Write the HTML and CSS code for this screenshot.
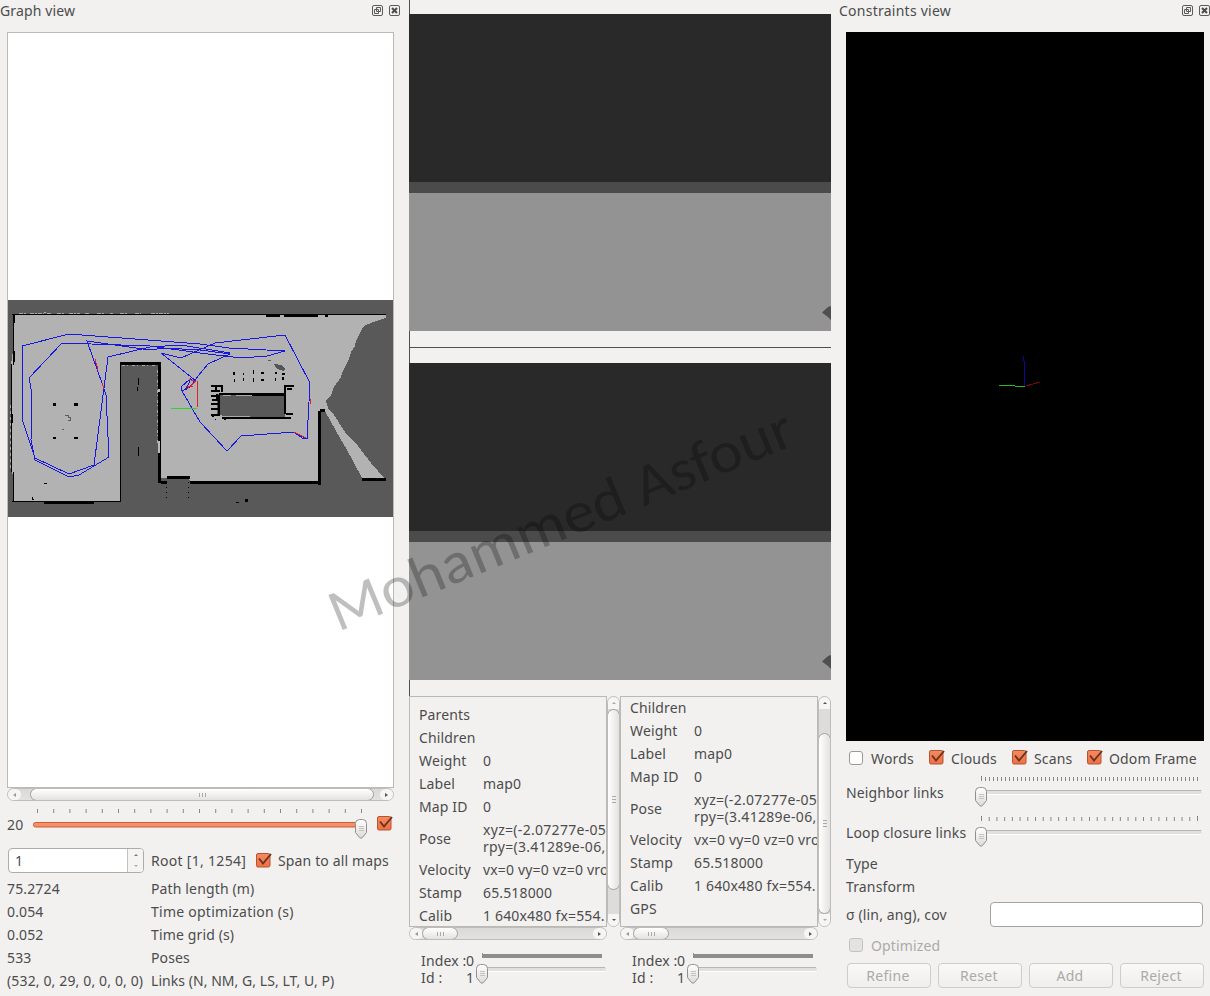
FILE: index.html
```html
<!DOCTYPE html>
<html lang="en">
<head>
<meta charset="utf-8">
<title>Database viewer</title>
<link rel="stylesheet" href="styles.css">
</head>
<body>
<svg class="defs" width="0" height="0">
  <defs>
    <linearGradient id="gh" x1="0" y1="0" x2="0" y2="1"><stop offset="0" stop-color="#fff"/><stop offset="1" stop-color="#dcdad8"/></linearGradient>
    <linearGradient id="go" x1="0" y1="0" x2="0" y2="1"><stop offset="0" stop-color="#f58a62"/><stop offset="1" stop-color="#ee7044"/></linearGradient>
    <symbol id="handle" viewBox="0 0 12 20"><path d="M.5 4.5Q.5 .5 4.5 .5H7.500Q11.500 .5 11.500 4.500V13.500L7.500 18.500Q6 20 4.500 18.500L.5 13.500Z" fill="url(#gh)" stroke="#92908d"/><path d="M4 7.500h5M4 9.500h5M4 11.500h5" stroke="#b9b7b5" stroke-width=".8"/></symbol>
    <symbol id="check" viewBox="0 0 16 16"><rect x=".5" y="1.500" width="13.500" height="13.500" rx="1.500" fill="url(#go)" stroke="#b5552f"/><path d="M3 6.500L7 11.500L15 2" fill="none" stroke="#6b3320" stroke-width="1.900"/></symbol>
    <symbol id="float" viewBox="0 0 11 11"><rect x=".5" y=".5" width="10" height="10" rx="1.500" fill="none" stroke="#5d5c59"/><path d="M4.500 2.500h4v4h-4zM2.500 4.500h4v4h-4z" fill="#f2f1f0" stroke="#5d5c59"/></symbol>
    <symbol id="close" viewBox="0 0 11 11"><rect x=".5" y=".5" width="10" height="10" rx="1.500" fill="none" stroke="#5d5c59"/><path d="M3 3l5 5M8 3l-5 5" stroke="#4c4b49" stroke-width="2"/></symbol>
  </defs>
</svg>
<main class="app">
  <section class="left">
    <header class="title"><span class="tt1">Graph view</span><span class="tools"><svg><use href="#float"/></svg><svg><use href="#close"/></svg></span></header>
    <div class="graph">
      <svg class="map" width="385" height="217" viewBox="8 300 385 217" shape-rendering="crispEdges">
        <rect x="8" y="300" width="385" height="217" fill="#595959"/>
        <path d="M13 315H386V318L373 322L364 326L361 331L356 341L355 346L351 352L349 359L343 371L341 377L334 387L331 395L326 401L328 408L334 415L345 432L358 446L371 463L386 480H363L352 459L347 450L340 438L325 411H320V482H190L189 478H161V362H120V502H13V475L11 470V365L13 350Z" fill="#b2b2b2"/>
        <path d="M19 313.500h7m4 0h14m3 0h5m5 0h8m4 0h11m5 0h4m8 0h7m6 0h3m7 0h8m7 0h6m10 0h18" stroke="#a9a9a9" fill="none" stroke-dasharray="4 1 2 1"/>
        <path d="M44 312h2M10.500 405v65" stroke="#aaa" stroke-dasharray="3 3"/>
        <path d="M12 314.500H386M13.500 315V365M11.500 364V472M13.500 472V502M12 501.500H120M120 362.500H161M120.500 362V502" stroke="#000" stroke-width="1.600" fill="none"/>
        <path d="M14 315v8M14 351v11M12 414v9M266 315.500h14M284 315.500h34M325 315.500h3" stroke="#000" stroke-width="2" fill="none"/>
        <path d="M120 363.500h41M159.500 363v120M44 502.500h50M161 482.500h6M167 477h23M190 482h131M319.500 411v74M320 410h5M362 479.500h24" stroke="#000" stroke-width="3" fill="none"/>
        <path d="M122 365.500h33M157.500 370v75" stroke="#aaa" stroke-dasharray="3 2 1 4"/>
        <path d="M159 389v3M159 441v12" stroke="#bbb" stroke-width="2"/>
        <path d="M138.500 378v7M137.500 387v4M138.500 447v9M44 483.500h3M32 497v2h2" stroke="#000" fill="none"/>
        <path d="M53 403h3v3h-3zM74 403h4v3h-4zM53 437h3v2h-3zM74 437h4v2h-4zM245 499h3v3h-3zM236 502h3v1h-3z"/>
        <path d="M65 415.500h3v2h2v3h-2M62 429.500h2M268 360.500h3" stroke="#5c5c5c" fill="none"/>
        <path d="M166.500 482v20M188.500 482v20" stroke="#000" stroke-dasharray="1 4"/>
        <path d="M274 364l7 1 4 4-1 2-7-2z" fill="#555"/>
        <path d="M217 394h68v23h-63v-2h-5z" fill="#595959"/>
        <path d="M219 393.500h66M285 385v29M222 417.500h69M211 386h11v6M284 386h10M287 389h5M286 414h7" stroke="#000" stroke-width="2" fill="none"/>
        <path d="M211 391h9M211 396h9M212 400h8M211 404h7M211 409h9M211 415h9M213 415v2M216 387v5M217 394v6M219 397v18M252 395h33" stroke="#000" stroke-width="1.500"/>
        <path d="M223 395h8M236 395h16M222 416.500h28" stroke="#aaa"/>
        <path d="M233 372h2v3h-2zM243 373h1v2h-1zM253 370h1v4h-1zM261 372h3v2h-3zM275 372h2v2h-2zM282 373h3v2h-3zM234 379h1v3h-1zM243 378h1v3h-1zM253 378h1v4h-1zM261 379h3v2h-3zM275 378h1v3h-1zM282 377h2v3h-2zM215 419h1v1h-1zM224 418h2v2h-2z"/>
        <g fill="none" stroke="#1717e0" stroke-width="1">
          <path d="M22 346L69 334L200 344L229 348L285 351L267 356L241 358L200 353L150 346L62 343L29 378L32 394L31 440L35 460L69 477L79 475L109 457L106 395L102 383L87 341L150 350L164 348L200 350L230 354L208 364L198 376L191 386L182 391L200 422L227 451L241 436L294 432L307 439L310 383L285 335L215 343L181 358L161 353L196 381"/>
          <path d="M22 346V419L35 458L69 474L94 465L108 357L150 347L181 345L230 353"/>
          <path d="M182 391L181 387L190 379L195 382L186 390L191 378M294 432L302 438L307 439"/>
        </g>
        <path d="M95 359L98 370M102 383L104 389M187 389L196 381M197 381V407M189 379L196 382M186 387L193 386M294 432L306 438M310 399V404" fill="none" stroke="#df2030" stroke-width="1"/>
        <path d="M171 408.500H197" stroke="#2bd52b"/>
      </svg>
    </div>
    <div class="hbar wide"><i class="ar l"></i><i class="th"><b></b></i><i class="ar r on"></i></div>
    <div class="iter">
      <span class="num">20</span>
      <svg class="sl" width="343" height="40" viewBox="33 801 343 40"><path d="M37 811H363" stroke="#898784" stroke-width="4" stroke-dasharray="1 15.200"/><rect x="33.500" y="822.500" width="330" height="4.500" rx="2" fill="#f78f67" stroke="#ca5f38"/><use href="#handle" x="355" y="819" width="12" height="20"/></svg>
      <svg class="ck"><use href="#check"/></svg>
    </div>
    <div class="rootrow">
      <div class="spin"><span>1</span><i><b class="up"></b><b class="dn"></b></i></div>
      <span class="root">Root [1, 1254]</span><svg class="ck"><use href="#check"/></svg><span class="span">Span to all maps</span>
    </div>
    <div class="stats">
      <span>75.2724</span><span>Path length (m)</span>
      <span>0.054</span><span class="wide-text">Time optimization (s)</span>
      <span>0.052</span><span>Time grid (s)</span>
      <span>533</span><span>Poses</span>
      <span>(532, 0, 29, 0, 0, 0, 0)</span><span class="tight-text">Links (N, NM, G, LS, LT, U, P)</span>
    </div>
  </section>

  <section class="mid">
    <div class="gap a"></div>
    <div class="cam"><svg width="9" height="14" viewBox="0 0 9 14"><path d="M0 6.500L6 1L9 0V14L6 11Z" fill="#4f4f4f"/></svg></div>
    <div class="gap b"></div>
    <div class="cam"><svg width="9" height="14" viewBox="0 0 9 14"><path d="M0 6.500L6 1L9 0V14L6 11Z" fill="#4f4f4f"/></svg></div>
    <div class="gap c"></div>
    <div class="infos">
      <div class="info">
        <div class="area"><div class="rows">
          <span>Parents</span><span></span><span>Children</span><span></span><span>Weight</span><span>0</span><span>Label</span><span>map0</span><span>Map ID</span><span>0</span><span>Pose</span><span class="pose">xyz=(-2.07277e-05<br>rpy=(3.41289e-06,</span><span>Velocity</span><span class="v">vx=0 vy=0 vz=0 vro</span><span>Stamp</span><span>65.518000</span><span>Calib</span><span class="v">1 640x480 fx=554.</span>
        </div></div>
        <div class="vbar v1"><i class="au"></i><i class="th"><b></b></i><i class="ad on"></i></div>
        <div class="hbar small"><i class="ar l"></i><i class="th"><b></b></i><i class="ar r on"></i></div>
      </div>
      <div class="info">
        <div class="area"><div class="rows scrolled">
          <span>Children</span><span></span><span>Weight</span><span>0</span><span>Label</span><span>map0</span><span>Map ID</span><span>0</span><span>Pose</span><span class="pose">xyz=(-2.07277e-05<br>rpy=(3.41289e-06,</span><span>Velocity</span><span class="v">vx=0 vy=0 vz=0 vro</span><span>Stamp</span><span>65.518000</span><span>Calib</span><span class="v">1 640x480 fx=554.</span><span>GPS</span><span></span>
        </div></div>
        <div class="vbar v2"><i class="au on"></i><i class="th"><b></b></i><i class="ad"></i></div>
        <div class="hbar small"><i class="ar l"></i><i class="th"><b></b></i><i class="ar r on"></i></div>
      </div>
    </div>
    <div class="idx">
      <div class="ix"><div class="ixl"><span>Index :</span><span>0</span><span>Id :</span><span>1</span></div><svg width="132" height="34" viewBox="475 951 132 34"><path d="M482 953v5h120v-4H483v-1z" fill="#8e8d8b"/><rect x="482" y="967" width="124" height="4" rx="2" fill="#e2e0de"/><path d="M483 967.500h122" stroke="#b8b6b3"/><path d="M483 971.500h122" stroke="#fff"/><use href="#handle" x="476" y="964" width="12" height="20"/></svg></div>
      <div class="ix"><div class="ixl"><span>Index :</span><span>0</span><span>Id :</span><span>1</span></div><svg width="132" height="34" viewBox="475 951 132 34"><path d="M482 953v5h120v-4H483v-1z" fill="#8e8d8b"/><rect x="482" y="967" width="124" height="4" rx="2" fill="#e2e0de"/><path d="M483 967.500h122" stroke="#b8b6b3"/><path d="M483 971.500h122" stroke="#fff"/><use href="#handle" x="476" y="964" width="12" height="20"/></svg></div>
    </div>
  </section>

  <section class="right">
    <header class="title"><span class="wide-text">Constraints view</span><span class="tools"><svg><use href="#float"/></svg><svg><use href="#close"/></svg></span></header>
    <div class="cloud"><svg width="358" height="709" viewBox="846 32 358 709" shape-rendering="crispEdges" fill="none"><path d="M1023.500 356v5M1024.500 361v25" stroke="#0808a0"/><path d="M999 385.500h16M1015 386.500h10" stroke="#28b828"/><path d="M1026 386L1040 382" stroke="#6c0b0b"/></svg></div>
    <div class="checks">
      <i class="box"></i><span class="w1">Words</span><svg class="ck"><use href="#check"/></svg><span class="w2">Clouds</span><svg class="ck"><use href="#check"/></svg><span class="w3">Scans</span><svg class="ck"><use href="#check"/></svg><span class="w4">Odom Frame</span>
    </div>
    <div class="lrow"><span>Neighbor links</span><svg width="230" height="40" viewBox="974 773 230 40"><path d="M981.500 776v5M1197.500 777v4" stroke="#777"/><path d="M981 779H1198" stroke="#898784" stroke-width="4" stroke-dasharray="1 3"/><rect x="981" y="790" width="221" height="4" rx="2" fill="#e2e0de"/><path d="M982 790.500h219" stroke="#b5b3b0"/><path d="M982 794.500h219" stroke="#fff"/><use href="#handle" x="975" y="787" width="12" height="20"/></svg></div>
    <div class="lrow"><span>Loop closure links</span><svg width="230" height="40" viewBox="974 773 230 40"><path d="M981.500 776v5M1197.500 776v5" stroke="#777"/><path d="M981 779H1198" stroke="#898784" stroke-width="4" stroke-dasharray="1 6.714"/><rect x="981" y="790" width="221" height="4" rx="2" fill="#e2e0de"/><path d="M982 790.500h219" stroke="#b5b3b0"/><path d="M982 794.500h219" stroke="#fff"/><use href="#handle" x="975" y="787" width="12" height="20"/></svg></div>
    <div class="plain">Type</div>
    <div class="plain">Transform</div>
    <div class="cov"><span>σ (lin, ang), cov</span><i></i></div>
    <div class="opt"><i class="box off"></i><span>Optimized</span></div>
    <div class="btns"><button disabled>Refine</button><button disabled>Reset</button><button disabled>Add</button><button disabled>Reject</button></div>
  </section>
  <svg class="mark" width="1210" height="996"><text transform="translate(338 632) rotate(-22.300)" textLength="497" lengthAdjust="spacingAndGlyphs">Mohammed Asfour</text></svg>
</main>
</body>
</html>
```
FILE: styles.css
```css
* { box-sizing: border-box; }
body { margin: 0; background: #f2f1f0; color: #4c4c4c; font: 14px/17px "Noto Sans", "Open Sans", sans-serif; letter-spacing: .14px; }
svg { display: block; flex: none; }
i, b { display: block; font-style: normal; }
span { white-space: nowrap; }
.defs { position: absolute; }
.app { position: relative; width: 1210px; height: 996px; overflow: hidden; display: grid; grid-template-columns: 409px 422px 379px; }
.title { height: 32px; display: flex; justify-content: space-between; padding-top: 2px; }
.tools { display: flex; gap: 6px; padding-top: 3px; }
.tools svg { width: 11px; height: 11px; }
.ck { width: 16px; height: 16px; }
.wide-text { letter-spacing: .25px; }
.tight-text { letter-spacing: .05px; }

.left .title { padding-right: 9px; }
.graph { margin-left: 7px; width: 387px; height: 756px; border: 1px solid #bbb9b6; background: #fff; padding-top: 267px; }
.hbar { height: 13px; border: 1px solid #bfbdba; border-radius: 7px; background: linear-gradient(#dbd9d6, #e4e2e0); display: flex; justify-content: space-between; overflow: hidden; }
.hbar.wide { margin-left: 7px; width: 387px; justify-content: flex-start; }
.hbar .th, .vbar .th { border: 1px solid #a3a19e; border-radius: 7px; display: flex; align-items: center; justify-content: center; }
.hbar .th { background: linear-gradient(#fff, #e4e2e0); margin: -1px 0; height: 13px; }
.hbar.wide .th { width: 344px; margin-left: 9px; }
.hbar .th b { width: 7px; height: 4px; background: repeating-linear-gradient(90deg, #aaa 0 1px, transparent 1px 3px); }
.ar { width: 13px; background: #f6f5f4; display: flex; align-items: center; justify-content: center; }
.ar::before { content: ""; border: 2.5px solid transparent; }
.ar.l { border-radius: 0 7px 7px 0; }
.ar.r { border-radius: 7px 0 0 7px; margin-left: auto; }
.ar.l::before { border-right: 3.5px solid #999; border-left: 0; }
.ar.r::before { border-left: 3.5px solid #555; border-right: 0; }
.iter { display: flex; height: 47px; padding-left: 7px; }
.num { width: 26px; padding-top: 15px; }
.iter .ck { margin: 14px 0 0 1px; }
.rootrow { height: 25px; margin-left: 8px; display: flex; align-items: center; }
.spin { width: 136px; height: 25px; display: flex; justify-content: space-between; border: 1px solid #aeaca9; border-radius: 4px; background: #fff; overflow: hidden; }
.spin span { padding: 3px 6px; }
.spin i { width: 16px; border-left: 1px solid #c4c2bf; background: #f5f4f3; display: flex; flex-direction: column; align-items: center; justify-content: space-around; }
.spin b { border: 2.5px solid transparent; }
.up { border-top: 0 !important; border-bottom-color: #777 !important; }
.dn { border-bottom: 0 !important; border-top-color: #aaa !important; }
.root { width: 105px; padding-left: 7px; letter-spacing: .3px; }
.rootrow .ck { margin: -2px 0 0 7px; }
.span { padding-left: 6px; }
.stats { display: grid; grid-template-columns: 144px 1fr; row-gap: 6px; padding: 7px 0 0 7px; }

.gap { border-left: 1px solid #4f4f4f; }
.gap.a { height: 14px; }
.gap.b { height: 32px; background: linear-gradient(#4f4f4f, #4f4f4f) 0 16px / 100% 1px no-repeat; }
.gap.c { height: 16px; }
.cam { height: 317px; background: linear-gradient(#292929 0 168px, #4b4b4b 168px 179px, #939393 179px); display: flex; justify-content: flex-end; padding-top: 292px; }
.infos { display: flex; height: 244px; }
.info { width: 211px; display: grid; grid-template: 231px 13px / 198px 13px; }
.area { border: 1px solid #bbb9b6; overflow: hidden; }
.rows { display: grid; grid-template-columns: 64px auto; row-gap: 6px; padding: 9px 0 0 9px; align-items: center; }
.rows span { min-height: 17px; }
.rows.scrolled { padding-top: 2px; }
.rows .v { letter-spacing: .17px; }
.rows .pose { letter-spacing: .3px; }
.vbar { border: 1px solid #bfbdba; border-radius: 7px; background: #dedcda; display: flex; flex-direction: column; overflow: hidden; }
.vbar .th { background: linear-gradient(90deg, #fff, #e4e2e0); margin: 0 -1px; height: 181px; }
.vbar .th b { width: 4px; height: 7px; background: repeating-linear-gradient(#aaa 0 1px, transparent 1px 3px); }
.au, .ad { height: 12px; background: #f6f5f4; display: flex; align-items: center; justify-content: center; }
.au::before, .ad::before { content: ""; border: 2.5px solid transparent; }
.au::before { border-bottom-color: #aaa; border-top: 0; }
.ad::before { border-top-color: #aaa; border-bottom: 0; }
.au.on::before { border-bottom-color: #555; }
.ad.on::before { border-top-color: #555; }
.ad { margin-top: auto; }
.v2 .th { margin-top: 24px; }
.hbar.small { justify-content: flex-start; }
.small .th { width: 36px; margin-left: -1px; }
.idx { display: flex; }
.ix { width: 211px; display: flex; padding-top: 11px; }
.ixl { display: grid; grid-template-columns: 45px 9px; width: 66px; padding: 1px 0 0 12px; justify-content: start; align-content: start; }

.right .title { padding-left: 8px; }
.right > :not(.title) { margin-left: 15px; }
.cloud { width: 358px; height: 709px; background: #000; }
.checks { display: flex; height: 32px; padding: 9px 0 0 2px; }
.box { width: 14px; height: 14px; margin: 1px 8px 0 1px; background: #fff; border: 1px solid #9c9a97; border-radius: 3px; }
.checks .ck { margin-top: -1px; }
.w1 { width: 58px; }
.w2, .w3, .w4 { padding-left: 6px; }
.w2 { width: 67px; }
.w3 { width: 59px; }
.lrow { display: flex; height: 40px; }
.lrow span { width: 128px; padding-top: 11px; }
.plain { height: 23px; padding-top: 2px; }
.cov { height: 37px; display: flex; }
.cov span { width: 144px; padding-top: 7px; }
.cov i { width: 213px; height: 25px; border: 1px solid #a5a3a0; border-radius: 4px; background: #fff; margin-top: 3px; }
.opt { height: 27px; display: flex; padding: 1px 0 0 2px; color: #acaaa7; }
.off { background: #e5e3e1; border-color: #c4c2bf; }
.btns { display: flex; gap: 7px; padding-left: 1px; }
.btns button { width: 84px; height: 25px; padding: 0 2px 0 0; border: 1px solid #cfcdca; border-radius: 4px; background: linear-gradient(#f9f9f8, #efeeec); color: #acaaa7; font: inherit; letter-spacing: .3px; }
.mark { position: absolute; inset: 0; pointer-events: none; }
.mark text { font: 500 59px Carlito, Lato, sans-serif; fill: #000; fill-opacity: .25; letter-spacing: 0; }
```
